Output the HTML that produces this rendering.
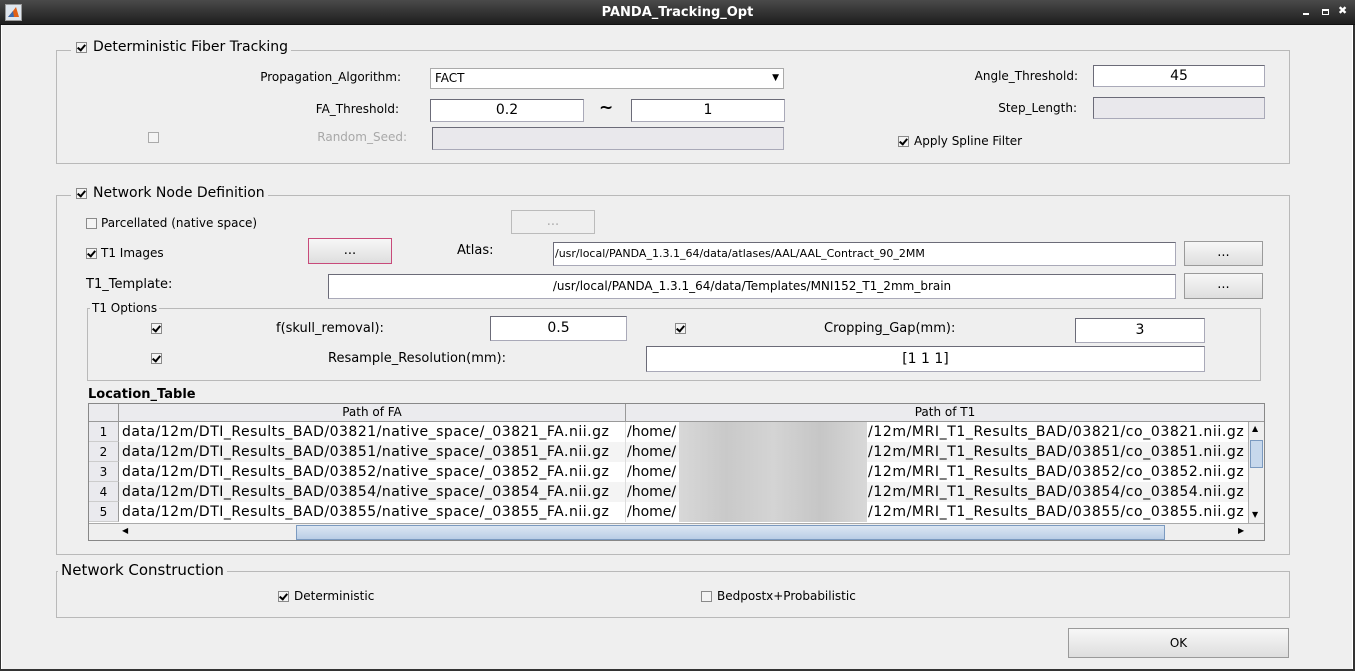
<!DOCTYPE html>
<html><head><meta charset="utf-8"><style>
*{box-sizing:border-box;margin:0;padding:0}
body{width:1355px;height:671px;overflow:hidden;background:#fff;font-family:"DejaVu Sans","Liberation Sans",sans-serif;font-size:12px;color:#000;position:relative}
.a{position:absolute;white-space:nowrap}
#win{position:absolute;left:2px;top:25px;width:1350px;height:644px;background:#efefef}
.tb{position:absolute;left:0;top:0;width:1355px;height:25px;background:linear-gradient(#4a4a4a,#1e1e1e);border-bottom:1px solid #111}
.panel{position:absolute;border:1px solid #b9b9b9}
.leg{position:absolute;background:#efefef;padding:0 3px;white-space:nowrap}
.cb{position:absolute;width:11px;height:11px;border:1px solid #8a8a8a;background:#f4f4f4}
.cb.on::after{content:"";position:absolute;left:2px;top:0px;width:3px;height:6px;border:solid #000;border-width:0 2px 2px 0;transform:rotate(40deg)}
.cb.dis{border-color:#aaa}
.in{position:absolute;background:#fff;border:1px solid #a9a9b8;border-top-color:#6b6b78;border-left-color:#6b6b78;text-align:center;font-size:14px;line-height:20px;overflow:hidden;white-space:nowrap}
.in.d{background:#e9e8ec}
.btn{position:absolute;background:linear-gradient(#f7f7f7,#dedede);border:1px solid #9a9a9a;text-align:center;font-size:13px;line-height:22px}
.r{text-align:right}
.row{position:absolute;left:0;height:20px;width:100%;font-size:14px;line-height:20px}
.num{position:absolute;left:0;width:30px;height:20px;background:#eaeaee;border-right:1px solid #999;border-bottom:1px solid #ccc;text-align:center;font-size:12px}
.c1{position:absolute;left:33px;width:504px;height:20px;overflow:hidden;border-right:1px solid #ddd;letter-spacing:0.5px}
.c2{position:absolute;left:538px;width:622px;height:20px;overflow:hidden}
.c2 .t{position:absolute;left:241px;top:0;letter-spacing:0.6px}
.blur{position:absolute;left:52px;top:0;width:188px;height:20px;background:linear-gradient(90deg,#d8d8d8,#c9c9c9,#d4d4d4,#c6c6c6,#d8d8d8)}
</style></head><body>
<div class="tb">
 <div class="a" style="left:5px;top:4px;width:17px;height:17px;background:#dfe6ee;border:1px solid #999"><svg width="15" height="15"><path d="M2 12 L7 6 L10 2 L13 12 Z" fill="#e06018"/><path d="M2 12 L7 6 L8 12 Z" fill="#3a6ab0"/></svg></div>
 <div class="a" style="left:0;width:1355px;top:5px;text-align:center;color:#fff;font-weight:bold;font-size:13px">PANDA_Tracking_Opt</div>
 <div class="a" style="left:1303px;top:13px;width:6px;height:2px;background:#fff"></div>
 <div class="a" style="left:1322px;top:9px;width:7px;height:6px;border:1.5px solid #fff;border-top-width:2px"></div>
 <div class="a" style="left:1338px;top:4px;color:#fff;font-weight:bold;font-size:11px">✖</div>
</div>
<div id="win"></div>
<div class="a" style="left:0;top:25px;width:1px;height:646px;background:#333"></div>
<div class="a" style="left:1353px;top:25px;width:2px;height:646px;background:#333"></div>
<div class="a" style="left:0;top:669px;width:1355px;height:2px;background:#333"></div>

<!-- Panel 1 -->
<div class="panel" style="left:56px;top:50px;width:1234px;height:114px"></div>
<div class="leg" style="left:71px;top:38px;font-size:14px;line-height:18px;padding-left:22px">Deterministic Fiber Tracking</div>
<div class="cb on" style="left:76px;top:42px"></div>
<div class="a r" style="left:200px;width:201px;top:70px">Propagation_Algorithm:</div>
<div class="a" style="left:430px;top:68px;width:354px;height:21px;background:#fff;border:1px solid #aaa;line-height:19px;padding-left:4px">FACT<span style="position:absolute;right:4px;top:0;font-size:9px">▼</span></div>
<div class="a r" style="left:250px;width:149px;top:102px">FA_Threshold:</div>
<div class="in" style="left:430px;top:99px;width:154px;height:23px">0.2</div>
<div class="a" style="left:599px;top:98px;font-size:17px;font-weight:bold">~</div>
<div class="in" style="left:631px;top:99px;width:154px;height:23px">1</div>
<div class="cb dis" style="left:148px;top:132px"></div>
<div class="a r" style="left:250px;width:157px;top:130px;color:#a8a8a8">Random_Seed:</div>
<div class="in d" style="left:432px;top:127px;width:352px;height:23px"></div>
<div class="a r" style="left:900px;width:178px;top:69px">Angle_Threshold:</div>
<div class="in" style="left:1093px;top:65px;width:172px;height:22px">45</div>
<div class="a r" style="left:900px;width:177px;top:101px">Step_Length:</div>
<div class="in d" style="left:1093px;top:97px;width:172px;height:22px"></div>
<div class="cb on" style="left:898px;top:136px"></div>
<div class="a" style="left:914px;top:134px">Apply Spline Filter</div>

<!-- Panel 2 -->
<div class="panel" style="left:56px;top:195px;width:1234px;height:360px"></div>
<div class="leg" style="left:71px;top:184px;font-size:14px;line-height:18px;padding-left:22px">Network Node Definition</div>
<div class="cb on" style="left:76px;top:188px"></div>
<div class="cb" style="left:86px;top:218px"></div>
<div class="a" style="left:101px;top:216px">Parcellated (native space)</div>
<div class="btn" style="left:511px;top:210px;width:84px;height:24px;color:#aaa;background:#efefef;border-color:#bbb">...</div>
<div class="cb on" style="left:86px;top:248px"></div>
<div class="a" style="left:101px;top:246px">T1 Images</div>
<div class="btn" style="left:308px;top:238px;width:84px;height:26px;border-color:#c84a7a;line-height:24px">...</div>
<div class="a" style="left:457px;top:243px;font-size:13px">Atlas:</div>
<div class="in" style="left:553px;top:242px;width:623px;height:24px;font-size:11px;text-align:left;padding-left:1px;line-height:22px">/usr/local/PANDA_1.3.1_64/data/atlases/AAL/AAL_Contract_90_2MM</div>
<div class="btn" style="left:1184px;top:241px;width:79px;height:25px">...</div>
<div class="a" style="left:86px;top:277px;font-size:13px">T1_Template:</div>
<div class="in" style="left:328px;top:274px;width:848px;height:25px;font-size:12px;line-height:23px">/usr/local/PANDA_1.3.1_64/data/Templates/MNI152_T1_2mm_brain</div>
<div class="btn" style="left:1184px;top:273px;width:79px;height:26px">...</div>

<div class="panel" style="left:87px;top:308px;width:1174px;height:73px"></div>
<div class="leg" style="left:90px;top:301px;font-size:12px;padding:0 2px">T1 Options</div>
<div class="cb on" style="left:151px;top:323px"></div>
<div class="a" style="left:276px;top:321px;font-size:13px">f(skull_removal):</div>
<div class="in" style="left:490px;top:316px;width:137px;height:25px;line-height:23px">0.5</div>
<div class="cb on" style="left:675px;top:323px"></div>
<div class="a" style="left:824px;top:321px;font-size:13px">Cropping_Gap(mm):</div>
<div class="in" style="left:1075px;top:318px;width:130px;height:25px;line-height:23px">3</div>
<div class="cb on" style="left:151px;top:353px"></div>
<div class="a" style="left:328px;top:351px;font-size:13px">Resample_Resolution(mm):</div>
<div class="in" style="left:646px;top:346px;width:559px;height:26px;line-height:24px">[1 1 1]</div>

<div class="a" style="left:88px;top:387px;font-weight:bold;font-size:13px">Location_Table</div>
<div class="a" style="left:88px;top:403px;width:1177px;height:138px;border:1px solid #888;background:#efefef">
 <div class="a" style="left:0;top:0;width:30px;height:18px;border-right:1px solid #999;border-bottom:1px solid #999;background:#ebebee"></div>
 <div class="a" style="left:30px;top:0;width:507px;height:18px;border-right:1px solid #999;border-bottom:1px solid #999;background:#ebebee;text-align:center;line-height:17px">Path of FA</div>
 <div class="a" style="left:537px;top:0;width:638px;height:18px;border-bottom:1px solid #999;background:#ebebee;text-align:center;line-height:17px">Path of T1</div>
 <div class="a" style="left:0;top:18px;width:1159px;height:101px;background:#fff;overflow:hidden">
  <div class="row" style="top:0;background:#fff"><div class="num">1</div><div class="c1">data/12m/DTI_Results_BAD/03821/native_space/_03821_FA.nii.gz</div><div class="c2">/home/<div class="blur"></div><span class="t">/12m/MRI_T1_Results_BAD/03821/co_03821.nii.gz</span></div></div>
  <div class="row" style="top:20px;background:#f4f4f4"><div class="num">2</div><div class="c1">data/12m/DTI_Results_BAD/03851/native_space/_03851_FA.nii.gz</div><div class="c2">/home/<div class="blur"></div><span class="t">/12m/MRI_T1_Results_BAD/03851/co_03851.nii.gz</span></div></div>
  <div class="row" style="top:40px;background:#fff"><div class="num">3</div><div class="c1">data/12m/DTI_Results_BAD/03852/native_space/_03852_FA.nii.gz</div><div class="c2">/home/<div class="blur"></div><span class="t">/12m/MRI_T1_Results_BAD/03852/co_03852.nii.gz</span></div></div>
  <div class="row" style="top:60px;background:#f4f4f4"><div class="num">4</div><div class="c1">data/12m/DTI_Results_BAD/03854/native_space/_03854_FA.nii.gz</div><div class="c2">/home/<div class="blur"></div><span class="t">/12m/MRI_T1_Results_BAD/03854/co_03854.nii.gz</span></div></div>
  <div class="row" style="top:80px;background:#fff"><div class="num">5</div><div class="c1">data/12m/DTI_Results_BAD/03855/native_space/_03855_FA.nii.gz</div><div class="c2">/home/<div class="blur"></div><span class="t">/12m/MRI_T1_Results_BAD/03855/co_03855.nii.gz</span></div></div>
 </div>
 <div class="a" style="left:1159px;top:18px;width:16px;height:101px;background:#efefef;border-left:1px solid #aaa">
  <div class="a" style="left:3px;top:2px;font-size:8px">▲</div>
  <div class="a" style="left:1px;top:18px;width:13px;height:28px;background:#c7d8ec;border:1px solid #7b9ac0"></div>
  <div class="a" style="left:3px;top:88px;font-size:8px">▼</div>
 </div>
 <div class="a" style="left:0;top:119px;width:1175px;height:17px;background:#efefef;border-top:1px solid #aaa">
  <div class="a" style="left:33px;top:2px;font-size:8px">◀</div>
  <div class="a" style="left:207px;top:1px;width:869px;height:15px;background:linear-gradient(#dbe6f3,#b9cde6);border:1px solid #7b9ac0"></div>
  <div class="a" style="left:1149px;top:2px;font-size:8px">▶</div>
 </div>
</div>

<!-- Panel 3 -->
<div class="panel" style="left:56px;top:571px;width:1234px;height:47px"></div>
<div class="leg" style="left:58px;top:561px;font-size:15px;line-height:19px">Network Construction</div>
<div class="cb on" style="left:278px;top:591px"></div>
<div class="a" style="left:294px;top:589px">Deterministic</div>
<div class="cb" style="left:701px;top:591px"></div>
<div class="a" style="left:717px;top:589px">Bedpostx+Probabilistic</div>

<div class="btn" style="left:1068px;top:628px;width:221px;height:30px;line-height:28px;font-size:12px">OK</div>
</body></html>
